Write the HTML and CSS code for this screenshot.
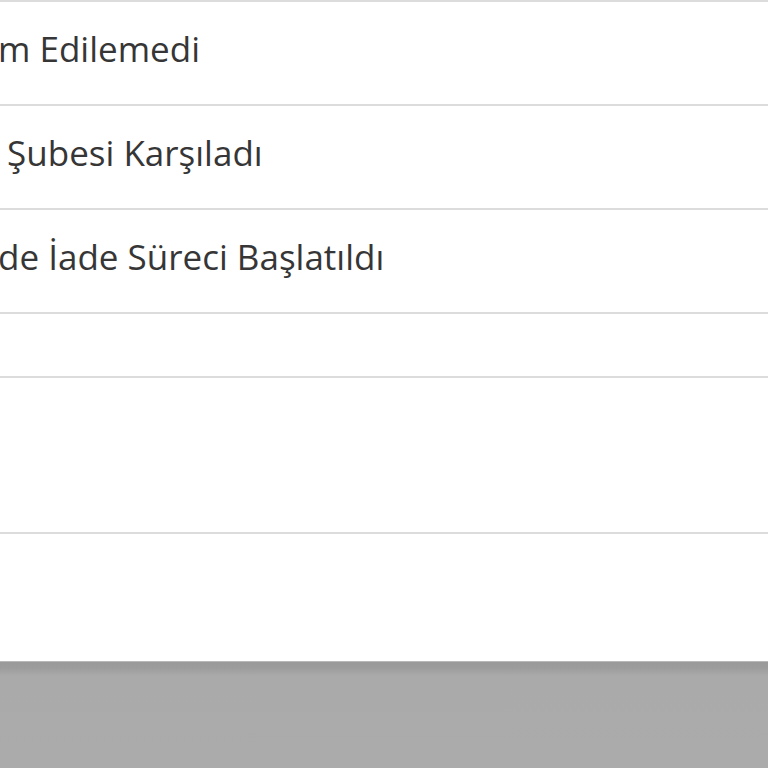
FILE: index.html
```html
<!DOCTYPE html>
<html lang="tr">
<head>
<meta charset="utf-8">
<title>Durumlar</title>
<link rel="stylesheet" href="styles.css">
</head>
<body>
<div class="page">
  <ul class="list">
    <li class="row"><span class="label">m Edilemedi</span></li>
    <li class="row"><span class="label">&nbsp;Şubesi Karşıladı</span></li>
    <li class="row"><span class="label">de İade Süreci Başlatıldı</span></li>
    <li class="row row-short"></li>
    <li class="row row-tall"></li>
  </ul>
  <div class="spacer"></div>
  <div class="footer"></div>
</div>
</body>
</html>
```
FILE: styles.css
```css
html, body {
  margin: 0;
  padding: 0;
  background: #ffffff;
  overflow: hidden;
}
.page {
  display: flex;
  flex-direction: column;
  width: 768px;
  height: 768px;
  font-family: "Open Sans", "Noto Sans", sans-serif;
  color: #363636;
}
.list {
  list-style: none;
  margin: 0;
  padding: 0;
  border-top: 2px solid #dcdcdc;
}
.row {
  box-sizing: border-box;
  height: 104px;
  display: flex;
  align-items: center;
  padding: 0 0 9px 0;
  border-bottom: 2px solid #dcdcdc;
}
.row-short {
  height: 64px;
}
.row-tall {
  height: 156px;
}
.label {
  font-size: 35px;
  margin-left: -2px;
  white-space: nowrap;
}
.spacer {
  flex: 1;
}
.footer {
  height: 106px;
  flex: none;
  border-top: 1px solid #b8b8b8;
  background: linear-gradient(to bottom, #999999 0px, #9c9c9c 6px, #aaaaaa 14px, #ababab 100%);
}
```
